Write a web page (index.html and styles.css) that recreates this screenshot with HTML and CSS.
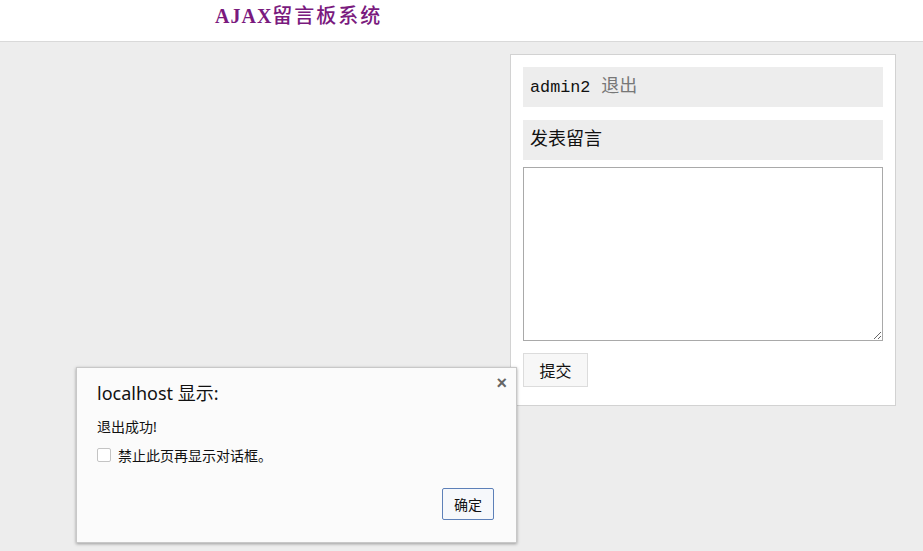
FILE: index.html
```html
<!DOCTYPE html>
<html lang="zh-CN">
<head>
<meta charset="utf-8">
<title>AJAX留言板系统</title>
<link rel="stylesheet" href="styles.css">
</head>
<body>
<header class="topbar">
  <h1 class="site-title">AJAX<span class="cjk">留言板系统</span></h1>
</header>
<main class="main">
  <section class="panel">
    <div class="bar user-bar"><span class="user">admin2</span> <a class="logout" href="#">退出</a></div>
    <div class="bar">发表留言</div>
    <textarea class="msg"></textarea>
    <div><button class="submit" type="button">提交</button></div>
  </section>
</main>
<div class="dialog">
  <span class="close">×</span>
  <div class="dlg-title">localhost 显示:</div>
  <div class="dlg-msg">退出成功!</div>
  <label class="dlg-check"><span class="box"></span>禁止此页再显示对话框。</label>
  <div class="dlg-actions"><button class="ok" type="button">确定</button></div>
</div>
</body>
</html>
```

FILE: styles.css
```css
html, body { margin: 0; padding: 0; }
body {
  background: #ededed;
  height: 551px;
  overflow: hidden;
  position: relative;
  font-family: "Liberation Serif", "Noto Sans CJK SC", serif;
}
.topbar {
  background: #fff;
  height: 41px;
  border-bottom: 1px solid #d9d9d9;
  box-sizing: content-box;
}
.site-title {
  margin: 0;
  padding-left: 215px;
  line-height: 33px;
  font-size: 20px;
  font-weight: bold;
  color: #7a1a7e;
  letter-spacing: 1px;
}
.site-title .cjk { font-weight: 500; letter-spacing: 2px; }
.main {
  display: flex;
  justify-content: flex-end;
  padding: 12px 27px 0 0;
}
.panel {
  width: 360px;
  background: #fff;
  border: 1px solid #d2d2d2;
  padding: 12px 12px 18px;
  display: flex;
  flex-direction: column;
}
.bar {
  background: #ededed;
  height: 40px;
  line-height: 40px;
  padding-left: 7px;
  font-size: 18px;
  color: #111;
  font-family: "Liberation Mono", "Noto Sans CJK SC", monospace;
}
.bar + .bar { margin-top: 13px; }
.user { font-size: 16.8px; }
.logout { color: #777; text-decoration: none; }
.msg {
  margin-top: 7px;
  height: 174px;
  box-sizing: border-box;
  border: 1px solid #a9a9a9;
  resize: vertical;
  width: 360px;
  display: block;
}
.submit {
  margin-top: 12px;
  width: 65px;
  height: 34px;
  background: #f7f7f7;
  border: 1px solid #dcdcdc;
  font-size: 16px;
  color: #111;
  font-family: "Noto Sans CJK SC", sans-serif;
  padding: 0;
}
.dialog {
  position: absolute;
  left: 76px;
  top: 367px;
  width: 439px;
  height: 174px;
  background: #fbfbfb;
  border: 1px solid #c8c8c8;
  box-shadow: 0 1px 3px rgba(0,0,0,0.35);
  font-family: "Noto Sans", "Noto Sans CJK SC", sans-serif;
  color: #111;
}
.close {
  position: absolute;
  right: 9px;
  top: 5px;
  font-size: 18px;
  font-weight: bold;
  color: #666;
  font-family: "Liberation Sans", sans-serif;
}
.dlg-title {
  position: absolute;
  left: 20px;
  top: 11px;
  font-size: 18px;
}
.dlg-msg {
  position: absolute;
  left: 20px;
  top: 48px;
  font-size: 14px;
}
.dlg-check {
  position: absolute;
  left: 20px;
  top: 77px;
  font-size: 14px;
  display: flex;
  align-items: center;
}
.box {
  width: 12px;
  height: 12px;
  border: 1px solid #c4c4c4;
  border-radius: 2px;
  background: #fff;
  margin-right: 7px;
}
.dlg-actions {
  position: absolute;
  right: 22px;
  bottom: 22px;
}
.ok {
  width: 52px;
  height: 32px;
  background: #f6f8fb;
  border: 1px solid #5d80b8;
  border-radius: 2px;
  font-size: 14px;
  font-family: "Noto Sans CJK SC", sans-serif;
  color: #111;
  padding: 0;
}
```
